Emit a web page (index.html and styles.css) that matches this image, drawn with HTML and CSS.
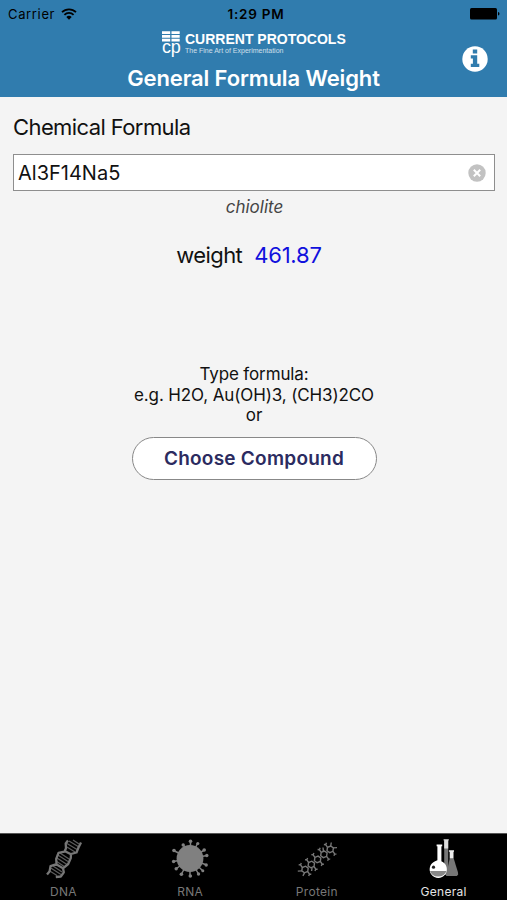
FILE: index.html
```
<!DOCTYPE html>
<html lang="en">
    <head>
        <meta charset="utf-8">
        <title>General Formula Weight</title>
        <link rel="stylesheet" href="styles.css">
    </head>
    <body>
        <header>
            <div class="status">
                <div class="carrier">
                    <span>Carrier</span>
                    <svg class="wifi" width="16" height="12" viewBox="0 0 16 12">
                        <path d="M1 4.2a10 10 0 0 1 14 0M3.4 6.8a6.6 6.6 0 0 1 9.2 0" fill="none" stroke="#000" stroke-width="1.8"/>
                        <path d="M5.3 9a3.9 3.9 0 0 1 5.4 0L8 11.8z"/>
                    </svg>
                </div>
                <span class="time">1:29 PM</span>
                <svg class="battery" width="30" height="12" viewBox="0 0 30 12">
                    <rect width="27" height="11.5" rx="1.5"/>
                    <path d="M28 4q1.5.3 1.5 1.8T28 7.6z"/>
                </svg>
            </div>
            <div class="brand">
                <div class="mark">
                    <svg width="18" height="11" viewBox="0 0 18 11">
                        <path d="M0 .2h8.2v2.7H0zM9.5.2h8.2v2.7H9.5zM0 4h8.2v2.7H0zM9.5 4h8.2v2.7H9.5zM0 7.8h8.2v2.7H0zM9.5 7.8h8.2v2.7H9.5z" fill="#fff"/>
                    </svg>
                    <span>cp</span>
                </div>
                <div class="brand-text">
                    <b>CURRENT PROTOCOLS</b>
                    <small>The Fine Art of Experimentation</small>
                </div>
            </div>
            <h1>General Formula Weight</h1>
            <svg class="info" width="26" height="26" viewBox="0 0 26 26">
                <circle cx="13" cy="13" r="12.7" fill="#fff"/>
                <path d="M10.8 3.4h4.4v4h-4.4zM8.800 9.200h6.400v8.600h2.100v3.300H8.800v-3.300h2.100v-5.300H8.800z" fill="#307cae"/>
            </svg>
        </header>

        <main>
            <label for="formula">Chemical Formula</label>
            <div class="field">
                <input type="text" id="formula" value="Al3F14Na5">
                <svg class="clear" width="18" height="18" viewBox="0 0 18 18">
                    <circle cx="9" cy="9" r="8.7" fill="#c2c2c2"/>
                    <path d="M5.8 5.8l6.4 6.4M12.2 5.8l-6.4 6.4" stroke="#fff" stroke-width="2"/>
                </svg>
            </div>
            <p class="name">chiolite</p>
            <p class="weight"><span class="word">weight</span><span class="value">461.87</span></p>
            <div class="hint">
                <p>Type formula:</p>
                <p class="examples">e.g. H2O, Au(OH)3, (CH3)2CO</p>
                <p>or</p>
            </div>
            <button type="button">Choose Compound</button>
        </main>

        <nav>
            <a class="tab">
                <svg width="40" height="40" viewBox="0 0 40 40">
                    <g fill="none" stroke="#5c5c5c" stroke-width="1.3">
                        <path d="M24 8l8 5M24 4.500l10 6M26 2l10 6M30 1l6 4M17 14l9 6M14 15.500l11 7M14 19l10 6.500M13 22l9 6M10 27l9 6M7 28.500l11 7M6 31.500l8 5"/>
                    </g>
                    <path d="M25 1.500l-2.300 3 .3 4.700-1.500 3.500-6 1.200-2.300 6 .3 5.200-6 2-1 5.500-2.500 3M38 3.500l-2.500 5-2 5-5.500 1.500-.2 4-2.600 6-5.200 4.300.8 4-3 4.200-5 .5M22 12.200l6 3M13.200 25.200l6.800 4" fill="none" stroke="#777" stroke-width="2.300" stroke-linejoin="round"/>
                </svg>
                <span>DNA</span>
            </a>
            <a class="tab">
                <svg width="40" height="40" viewBox="0 0 40 40">
                    <g fill="#808080" stroke="#808080">
                        <circle cx="20" cy="19.5" r="13.4" stroke="none"/>
                        <path d="M20.5 19.5V2M20 19.5L27.8 4M20 19.5L34.5 11M20 19.5l17-3M20 19.5l16.5 6.5M20 19.5l13 12.5M20 19.5l8.7 16M20 19.5V37M20 19.5l-8.8 16M20 19.5L6.5 29.5M20 19.5l-16.8 3M20 19.5L3.5 11.5M20 19.5l-7-14.5" stroke-width="1.5"/>
                        <g stroke="none">
                            <circle cx="20.5" cy="2.2" r="1.8"/>
                            <circle cx="27.8" cy="4.5" r="1.6"/>
                            <circle cx="34.2" cy="11" r="1.8"/>
                            <circle cx="36.8" cy="16.5" r="1.7"/>
                            <circle cx="36.2" cy="26" r="1.7"/>
                            <circle cx="32.8" cy="31.8" r="1.5"/>
                            <circle cx="28.5" cy="35" r="1.7"/>
                            <circle cx="20.3" cy="37" r="1.8"/>
                            <circle cx="11.4" cy="35.2" r="1.8"/>
                            <circle cx="6.2" cy="29.7" r="1.7"/>
                            <circle cx="3.6" cy="22.5" r="1.7"/>
                            <circle cx="4" cy="11.5" r="1.8"/>
                            <circle cx="13.2" cy="6" r="1.7"/>
                        </g>
                    </g>
                </svg>
                <span>RNA</span>
            </a>
            <a class="tab">
                <svg width="40" height="40" viewBox="0 0 40 40">
                    <defs>
                        <g id="ring">
                            <path d="M-3.200 1.400l.5-3.400L.5-3.300l2.700 1.900-.5 3.400L-.5 3.300zM-2.700-2l-1.800-2.600-1.800-.2M-4.500-4.600l.8-1.900M2.700 2l1.800 2.600 1.800.2M4.500 4.600l-.8 1.900"/>
                        </g>
                    </defs>
                    <g fill="none" stroke="#777" stroke-width="1.400">
                        <use href="#ring" x="8" y="30.500"/>
                        <use href="#ring" x="14.300" y="25.500"/>
                        <use href="#ring" x="20.600" y="20.400"/>
                        <use href="#ring" x="26.900" y="15.300"/>
                        <use href="#ring" x="33.200" y="10.300"/>
                        <path d="M4.800 31.900l-4 .2M7.500 33.800l-1.600 3M36.400 8.900l3.600-.3M33.700 7l.6-3.500M26.400 12l-.4-3.500M15 29l-.4 3"/>
                    </g>
                </svg>
                <span>Protein</span>
            </a>
            <a class="tab active">
                <svg width="40" height="40" viewBox="0 0 40 40">
                    <path d="M20.200 2h4v34h-4z" fill="#777"/>
                    <path d="M20.200 1h4v8.500h-4zM19.600.3h5.200v1.200h-5.200z" fill="#ddd"/>
                    <path d="M25.700 19.500h4l4.200 13.500.3 2.500-1.400 1.500H22z" fill="#777"/>
                    <path d="M25.700 12h3.800v7.500h-3.800zM24.900 11.300H30v1.500h-5.100z" fill="#eee"/>
                    <path d="M13.400 7h4v15.300a8.600 8.600 0 1 1-6.300 0l2.300-1z" fill="#fff"/>
                    <path d="M6 32h16.400a8.400 7 0 0 1-16.400 0z" fill="#888"/>
                    <path d="M12.600 5.500h5.600v1.800h-5.600z" fill="#fff"/>
                    <circle cx="9.500" cy="28.200" r="1.600" fill="#222"/>
                </svg>
                <span>General</span>
            </a>
        </nav>
    </body>
</html>
```
FILE: styles.css
```
* {
    margin: 0;
    padding: 0;
    box-sizing: border-box;
}

body {
    display: flex;
    flex-direction: column;
    height: 100vh;
    overflow: hidden;
    background: #f4f4f4;
    color: #111;
    font-family: Inter, "Liberation Sans", sans-serif;
}

svg {
    display: block;
    flex: none;
}

header {
    position: relative;
    height: 97px;
    background: #307cae;
    color: white;
}

.status {
    display: grid;
    grid-template-columns: 1fr auto 1fr;
    align-items: center;
    height: 28px;
    padding: 0 7px 0 8px;
    color: #000;
    font-size: 13px;
}

.carrier {
    display: flex;
    align-items: center;
    gap: 6px;
    letter-spacing: 0.65px;
}

.time {
    padding-left: 4px;
    font-size: 13.5px;
    font-weight: 600;
    letter-spacing: 0.8px;
}

.battery {
    justify-self: end;
}

.brand {
    display: flex;
    gap: 5px;
    height: 34px;
    padding: 3px 0 0 162px;
}

.mark {
    width: 18px;
}

.mark span {
    display: block;
    font: 18px/15px "Liberation Sans", sans-serif;
    letter-spacing: -0.3px;
    margin-top: -2px;
}

.brand-text {
    font-family: "Liberation Sans", Arial, sans-serif;
    white-space: nowrap;
}

.brand-text b {
    display: block;
    font-size: 14px;
    line-height: 16px;
}

.brand-text small {
    display: block;
    font-size: 7px;
    line-height: 8px;
    opacity: 0.75;
}

h1 {
    text-align: center;
    font-size: 22px;
    font-weight: 600;
    line-height: 32px;
    letter-spacing: -0.12px;
}

.info {
    position: absolute;
    top: 46px;
    right: 19px;
}

main {
    flex: 1;
    display: flex;
    flex-direction: column;
    align-items: center;
    padding: 15px 12px 0 13px;
}

label {
    align-self: flex-start;
    font-size: 22px;
    line-height: 30px;
    letter-spacing: -0.6px;
}

.field {
    display: flex;
    align-items: center;
    width: 100%;
    height: 37px;
    margin-top: 12px;
    padding: 0 8px 0 4px;
    background: white;
    border: 1px solid #8e8e8e;
}

input {
    flex: 1;
    min-width: 0;
    border: none;
    outline: none;
    background: none;
    color: #111;
    font-family: inherit;
    font-size: 20px;
}

.name {
    margin-top: 4px;
    padding-left: 1px;
    color: #444;
    font-size: 17px;
    font-style: italic;
    line-height: 24px;
}

.weight {
    display: flex;
    gap: 12px;
    margin-top: 20px;
    margin-right: 10px;
    font-size: 22px;
    line-height: 32px;
}

.word {
    letter-spacing: -0.6px;
}

.value {
    color: #1010dd;
    letter-spacing: -0.2px;
}

.hint {
    margin-top: 93px;
    text-align: center;
    font-size: 17px;
    line-height: 20.5px;
    letter-spacing: -0.12px;
}

button {
    width: 245px;
    height: 43px;
    margin-top: 11px;
    background: white;
    border: 1px solid #888;
    border-radius: 22px;
    color: #2b2b60;
    font-family: inherit;
    font-size: 19px;
    font-weight: 600;
    letter-spacing: 0.25px;
}

nav {
    display: grid;
    grid-template-columns: repeat(4, 1fr);
    height: 67px;
    padding-top: 5px;
    background: #000;
    border-top: 1px solid #555;
}

.tab {
    display: flex;
    flex-direction: column;
    align-items: center;
    color: #777;
    font-size: 12px;
    line-height: 25px;
    letter-spacing: 0.3px;
}

.active {
    color: #e5e5e5;
}
```
